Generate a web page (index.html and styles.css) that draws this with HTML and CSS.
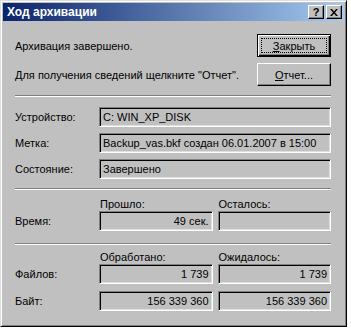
FILE: index.html
```html
<!DOCTYPE html>
<html lang="ru">
  <head>
    <meta charset="UTF-8" />
    <title>Ход архивации</title>
    <link rel="stylesheet" href="styles.css">
  </head>

  <body>
    <div class="window">
      <div class="titlebar">
        <span class="title">Ход архивации</span>
        <div class="caption-buttons">
          <button class="cap-btn help">?</button>
          <button class="cap-btn close">
            <svg width="8" height="7" viewBox="0 0 8 7"><path d="M0 0h2l2 2.5L6 0h2L5 3.5 8 7H6L4 4.5 2 7H0l3-3.5z" fill="#000"/></svg>
          </button>
        </div>
      </div>

      <div class="content">
        <div class="top">
          <div class="msg">Архивация завершено.</div>
          <button class="btn default"><span class="focus"><u>З</u>акрыть</span></button>
          <div class="msg">Для получения сведений щелкните "Отчет".</div>
          <button class="btn"><span class="nofocus"><u>О</u>тчет...</span></button>
        </div>

        <div class="sep sep-info"></div>

        <div class="info">
          <div class="label">Устройство:</div>
          <div class="field">C: WIN_XP_DISK</div>
          <div class="label">Метка:</div>
          <div class="field">Backup_vas.bkf создан 06.01.2007 в 15:00</div>
          <div class="label">Состояние:</div>
          <div class="field">Завершено</div>
        </div>

        <div class="sep sep-time"></div>

        <div class="stats">
          <div></div>
          <div class="head">Прошло:</div>
          <div class="head">Осталось:</div>
          <div class="label">Время:</div>
          <div class="field num">49 сек.</div>
          <div class="field num"></div>
        </div>

        <div class="sep sep-count"></div>

        <div class="stats">
          <div></div>
          <div class="head">Обработано:</div>
          <div class="head">Ожидалось:</div>
          <div class="label">Файлов:</div>
          <div class="field num">1 739</div>
          <div class="field num">1 739</div>
          <div class="label">Байт:</div>
          <div class="field num">156 339 360</div>
          <div class="field num">156 339 360</div>
        </div>
      </div>
    </div>
  </body>
</html>
```

FILE: styles.css
```css
body {
  margin: 0;
  background-color: #fff;
  font-family: 'Liberation Sans', Arial, sans-serif;
  font-size: 11px;
  color: #000;
}

.window {
  width: 341px;
  height: 321px;
  background-color: #c0c0c0;
  border-top: 1px solid #dfdfdf;
  border-left: 1px solid #dfdfdf;
  border-right: 1px solid #000;
  border-bottom: 1px solid #000;
  box-shadow: inset 1px 1px 0 #fff, inset -1px -1px 0 #808080;
  padding: 2px;
  display: flex;
  flex-direction: column;
}

.titlebar {
  height: 18px;
  background: linear-gradient(to right, #0a246a, #a6caf0);
  display: flex;
  align-items: center;
  justify-content: space-between;
  padding: 0 2px 0 4px;
}

.title {
  color: #fff;
  font-weight: bold;
  font-size: 12px;
}

.caption-buttons {
  display: flex;
  gap: 2px;
}

.cap-btn {
  width: 16px;
  height: 14px;
  padding: 0;
  margin: 0;
  background-color: #c0c0c0;
  border-top: 1px solid #fff;
  border-left: 1px solid #fff;
  border-right: 1px solid #000;
  border-bottom: 1px solid #000;
  box-shadow: inset -1px -1px 0 #808080;
  display: flex;
  align-items: center;
  justify-content: center;
  font-family: 'Liberation Sans', Arial, sans-serif;
  font-weight: bold;
  font-size: 11px;
  line-height: 1;
  color: #000;
}

.content {
  padding: 13px 13px 0 12px;
}

.top {
  display: grid;
  grid-template-columns: 1fr 74px;
  row-gap: 6px;
  align-items: center;
}

.btn {
  height: 23px;
  width: 74px;
  padding: 0;
  background-color: #c0c0c0;
  border-top: 1px solid #fff;
  border-left: 1px solid #fff;
  border-right: 1px solid #000;
  border-bottom: 1px solid #000;
  box-shadow: inset -1px -1px 0 #808080;
  font-family: 'Liberation Sans', Arial, sans-serif;
  font-size: 11px;
  color: #000;
  display: flex;
  align-items: stretch;
}

.btn.default {
  border: 1px solid #000;
  box-shadow: inset 1px 1px 0 #fff, inset -1px -1px 0 #000, inset -2px -2px 0 #808080;
}

.btn .focus,
.btn .nofocus {
  flex: 1;
  display: flex;
  align-items: center;
  justify-content: center;
  margin: 3px;
  border: 1px dotted #000;
}

.btn .nofocus {
  border-color: transparent;
}

.sep {
  height: 0;
  border-top: 1px solid #808080;
  border-bottom: 1px solid #fff;
}

.sep-info {
  margin: 9px 0 10px;
}

.sep-time {
  margin: 9px 0 8px;
}

.sep-count {
  margin: 12px 0 6px;
}

.info {
  display: grid;
  grid-template-columns: 84px 1fr;
  row-gap: 6px;
  align-items: center;
}

.field {
  height: 18px;
  line-height: 18px;
  padding: 0 3px;
  border-top: 1px solid #808080;
  border-left: 1px solid #808080;
  border-right: 1px solid #fff;
  border-bottom: 1px solid #fff;
  box-shadow: inset 1px 1px 0 #000, inset -1px -1px 0 #dfdfdf;
  white-space: nowrap;
  overflow: hidden;
}

.num {
  text-align: right;
}

.stats {
  display: grid;
  grid-template-columns: 79px 1fr 1fr;
  column-gap: 5px;
  row-gap: 7px;
  align-items: center;
}

.stats .head {
  height: 13px;
  line-height: 13px;
  padding-left: 1px;
  margin-bottom: -7px;
}
```
